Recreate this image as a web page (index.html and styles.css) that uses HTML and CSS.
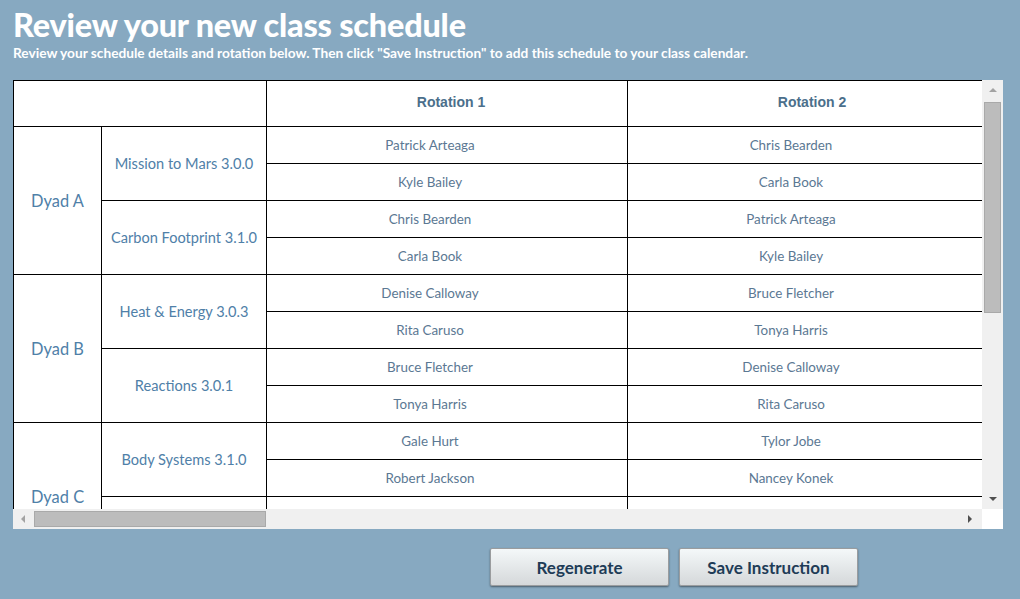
FILE: index.html
```html
<!DOCTYPE html>
<html>
<head>
<meta charset="utf-8">
<link rel="stylesheet" href="styles.css">
</head>
<body>
<header class="intro">
  <h1 class="title">Review your new class schedule</h1>
  <p class="subtitle">Review your schedule details and rotation below. Then click "Save Instruction" to add this schedule to your class calendar.</p>
</header>

<div class="scroller">
  <div class="viewport">
    <table class="schedule">
      <colgroup>
        <col class="c-dyad"><col class="c-course"><col class="c-rot"><col class="c-rot">
      </colgroup>
      <thead>
        <tr><th colspan="2"></th><th>Rotation 1</th><th>Rotation 2</th></tr>
      </thead>
      <tbody>
        <tr><td class="dyad" rowspan="4">Dyad A</td><td class="course" rowspan="2">Mission to Mars 3.0.0</td><td>Patrick Arteaga</td><td>Chris Bearden</td></tr>
        <tr><td>Kyle Bailey</td><td>Carla Book</td></tr>
        <tr><td class="course" rowspan="2">Carbon Footprint 3.1.0</td><td>Chris Bearden</td><td>Patrick Arteaga</td></tr>
        <tr><td>Carla Book</td><td>Kyle Bailey</td></tr>

        <tr><td class="dyad" rowspan="4">Dyad B</td><td class="course" rowspan="2">Heat &amp; Energy 3.0.3</td><td>Denise Calloway</td><td>Bruce Fletcher</td></tr>
        <tr><td>Rita Caruso</td><td>Tonya Harris</td></tr>
        <tr><td class="course" rowspan="2">Reactions 3.0.1</td><td>Bruce Fletcher</td><td>Denise Calloway</td></tr>
        <tr><td>Tonya Harris</td><td>Rita Caruso</td></tr>

        <tr><td class="dyad" rowspan="4">Dyad C</td><td class="course" rowspan="2">Body Systems 3.1.0</td><td>Gale Hurt</td><td>Tylor Jobe</td></tr>
        <tr><td>Robert Jackson</td><td>Nancey Konek</td></tr>
        <tr><td class="course" rowspan="2"></td><td></td><td></td></tr>
        <tr><td></td><td></td></tr>
      </tbody>
    </table>
  </div>
  <div class="vbar">
    <span class="arrow up"></span>
    <div class="vtrack"><div class="vthumb"></div></div>
    <span class="arrow down"></span>
  </div>
  <div class="hbar">
    <span class="arrow left"></span>
    <div class="htrack"><div class="hthumb"></div></div>
    <span class="arrow right"></span>
  </div>
  <div class="corner"></div>
</div>

<div class="actions">
  <button class="btn">Regenerate</button>
  <button class="btn">Save Instruction</button>
</div>
</body>
</html>
```

FILE: styles.css
```css
html, body {
  margin: 0;
  padding: 0;
}
body {
  background: #87a9c1;
  font-family: Lato, "Open Sans", sans-serif;
  width: 1020px;
  height: 599px;
  overflow: hidden;
}
.intro {
  padding: 6px 0 0 13px;
  height: 74px;
  box-sizing: border-box;
}
.title {
  margin: 0;
  font-size: 32.4px;
  line-height: 38px;
  font-weight: 900;
  color: #fff;
  letter-spacing: -0.2px;
}
.subtitle {
  margin: 1px 0 0;
  font-size: 13.7px;
  line-height: 16px;
  font-weight: 700;
  color: #fff;
}
.scroller {
  margin: 6px 0 0 13px;
  display: grid;
  grid-template-columns: 969px 21px;
  grid-template-rows: 429px 20px;
  width: 990px;
}
.viewport {
  overflow: hidden;
  background: #fff;
}
.schedule {
  border-collapse: collapse;
  table-layout: fixed;
  width: 976px;
  background: #fff;
}
.c-dyad { width: 88px; }
.c-course { width: 165px; }
.c-rot { width: 361px; }
.schedule th,
.schedule td {
  border: 1px solid #000;
  padding: 0;
  text-align: center;
  vertical-align: middle;
}
.schedule th {
  height: 42px;
  font-family: "Liberation Sans", Arial, sans-serif;
  font-size: 14px;
  font-weight: 700;
  color: #4b6f8b;
  padding: 0 0 3px 8px;
}
.schedule td {
  height: 36px;
  font-size: 13.4px;
  color: #5b7893;
  padding-right: 34px;
}
.schedule td.course {
  font-size: 14.6px;
  color: #4f80a8;
  padding-right: 0;
}
.schedule td.dyad {
  font-size: 16.4px;
  color: #4f80a8;
  padding-right: 0;
}
.vbar {
  background: #f0f0f0;
  display: flex;
  flex-direction: column;
  align-items: center;
}
.vtrack {
  flex: 1;
  width: 100%;
  padding: 3px 2px 0;
  box-sizing: border-box;
}
.vthumb {
  height: 211px;
  background: #bcbcbc;
  border: 1px solid #a9a9a9;
  box-sizing: border-box;
}
.hbar {
  background: #f0f0f0;
  display: flex;
  align-items: center;
}
.htrack {
  flex: 1;
  height: 100%;
  padding: 2px 0 2px 1px;
  box-sizing: border-box;
}
.hthumb {
  width: 232px;
  height: 100%;
  background: #bcbcbc;
  border: 1px solid #a9a9a9;
  box-sizing: border-box;
}
.corner {
  background: #fff;
}
.arrow {
  display: block;
  width: 0;
  height: 0;
  flex: none;
}
.arrow.up {
  margin: 8px 0 7px;
  border-left: 4px solid transparent;
  border-right: 4px solid transparent;
  border-bottom: 4px solid #a3a3a3;
}
.arrow.down {
  margin: 8px 0 8px;
  border-left: 4px solid transparent;
  border-right: 4px solid transparent;
  border-top: 4px solid #505050;
}
.arrow.left {
  margin: 0 8px 0 8px;
  border-top: 4px solid transparent;
  border-bottom: 4px solid transparent;
  border-right: 4px solid #a3a3a3;
}
.arrow.right {
  margin: 0 10px 0 8px;
  border-top: 4px solid transparent;
  border-bottom: 4px solid transparent;
  border-left: 4px solid #505050;
}
.actions {
  display: flex;
  gap: 10px;
  padding: 19px 0 0 490px;
}
.btn {
  width: 179px;
  height: 38px;
  border: 1px solid #9a9c9e;
  border-radius: 2px;
  background: linear-gradient(#f4f8f9, #d5d8da);
  box-shadow: 0 1px 2px rgba(0, 0, 0, 0.45);
  font-family: Lato, "Open Sans", sans-serif;
  font-size: 17px;
  font-weight: 700;
  color: #1e3c57;
  padding: 0;
  cursor: pointer;
}
```
